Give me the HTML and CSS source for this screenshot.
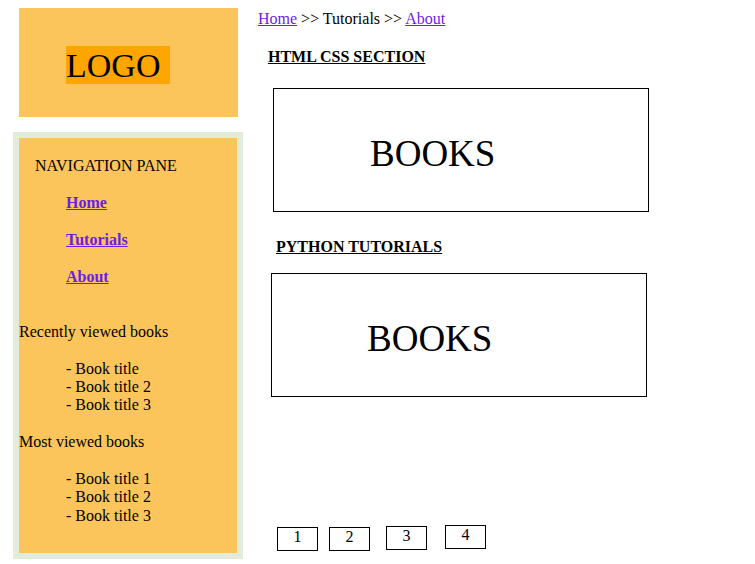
FILE: index.html
```html
<!DOCTYPE html>
<html lang="en">
<head>
<meta charset="utf-8">
<title>Books</title>
<link rel="stylesheet" href="styles.css">
</head>
<body>
<div class="page">
  <aside class="sidebar">
    <div class="logo"><span class="logo-text">LOGO</span></div>
    <nav class="nav">
      <div class="nav-title">NAVIGATION PANE</div>
      <ul class="nav-links">
        <li><a href="#">Home</a></li>
        <li><a href="#">Tutorials</a></li>
        <li><a href="#">About</a></li>
      </ul>
      <div class="group-title group-first">Recently viewed books</div>
      <ul class="book-list">
        <li>- Book title</li>
        <li>- Book title 2</li>
        <li>- Book title 3</li>
      </ul>
      <div class="group-title">Most viewed books</div>
      <ul class="book-list">
        <li>- Book title 1</li>
        <li>- Book title 2</li>
        <li>- Book title 3</li>
      </ul>
    </nav>
  </aside>
  <main class="main">
    <div class="breadcrumb"><a href="#">Home</a> &gt;&gt; Tutorials &gt;&gt; <a href="#">About</a></div>
    <h2 class="section-title section-html">HTML CSS SECTION</h2>
    <div class="book-box box-html">BOOKS</div>
    <h2 class="section-title section-python">PYTHON TUTORIALS</h2>
    <div class="book-box box-python">BOOKS</div>
    <div class="pager">
      <div class="page-num p1">1</div>
      <div class="page-num p2">2</div>
      <div class="page-num p3">3</div>
      <div class="page-num p4">4</div>
    </div>
  </main>
</div>
</body>
</html>
```
FILE: styles.css
```css
* { box-sizing: border-box; }
html, body { margin: 0; padding: 0; background: #ffffff; }
body {
  font-family: "Liberation Serif", "Times New Roman", serif;
  font-size: 16px;
  line-height: 1.15;
  color: #000000;
}
a { color: #6a1ee6; text-decoration: underline; }

.page { display: flex; align-items: flex-start; }

.sidebar { padding: 8px 0 0 13px; width: 243px; flex: none; }
.logo {
  margin-left: 6px;
  width: 219px;
  height: 109px;
  background: #fbc55c;
  padding: 38px 0 0 47px;
}
.logo-text {
  display: inline-block;
  background: #ffa500;
  font-size: 34px;
  height: 38px;
  line-height: 40px;
  padding-right: 10px;
}

.nav {
  margin-top: 15px;
  width: 230px;
  height: 427px;
  border: 6px solid #e3ebda;
  background: #fbc55c;
  padding-top: 19.4px;
}
.nav-title { margin-left: 16px; }
.nav-links { list-style: none; margin: 18.4px 0 0 47px; padding: 0; }
.nav-links li + li { margin-top: 18.4px; }
.nav-links a { font-weight: bold; }
.group-title { margin-top: 18.4px; }
.group-first { margin-top: 36.8px; }
.book-list { list-style: none; margin: 18.4px 0 0 0; padding: 0 0 0 47px; }

.main { padding: 10px 0 0 15px; flex: 1; }
.breadcrumb { line-height: 18.4px; }
.section-title {
  font-size: 16px;
  font-weight: bold;
  text-decoration: underline;
  margin: 0;
  line-height: 18.4px;
}
.section-html { margin: 19.2px 0 0 10px; }
.section-python { margin: 26.4px 0 0 18px; }
.book-box {
  width: 376px;
  height: 124px;
  border: 1px solid #000000;
  font-size: 37px;
  line-height: 1.15;
}
.box-html { margin: 22px 0 0 15px; padding: 44px 0 0 96px; }
.box-python { margin: 16.2px 0 0 13px; padding: 44px 0 0 95px; }

.pager { display: flex; align-items: flex-start; margin: 128px 0 0 19px; }
.page-num {
  width: 41px;
  height: 24px;
  border: 1px solid #000000;
  text-align: center;
  line-height: 18.4px;
}
.p1 { margin-top: 2px; }
.p2 { margin: 2px 0 0 11px; }
.p3 { margin: 1px 0 0 16px; }
.p4 { margin: 0 0 0 18px; }
```
